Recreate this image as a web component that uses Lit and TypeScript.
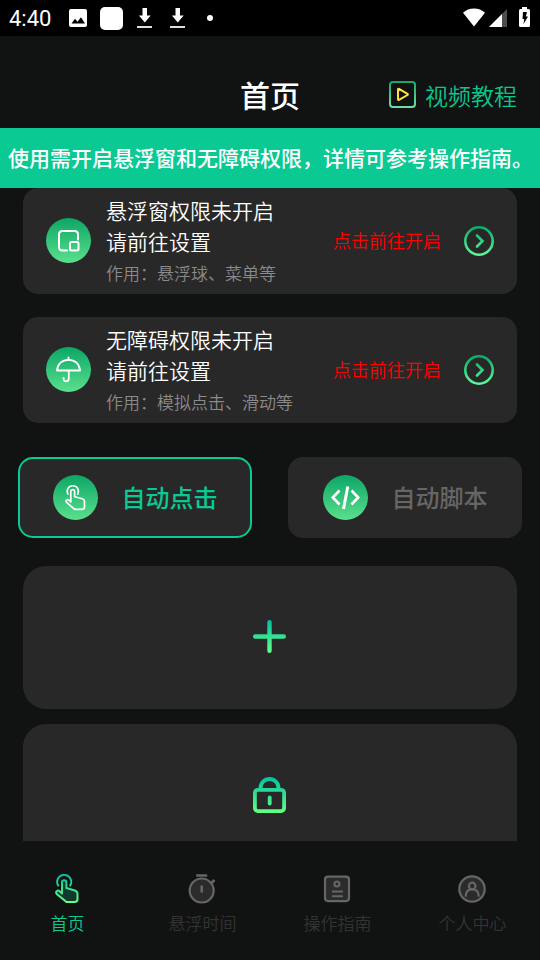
import { LitElement, html, css, svg, TemplateResult } from "lit";
import { customElement, property, state } from "lit/decorators.js";
import { classMap } from "lit/directives/class-map.js";

const gradient = (top: string, bottom: string, y1: number, y2: number) => svg`
  <defs>
    <linearGradient id="g" gradientUnits="userSpaceOnUse" x1="0" y1=${y1} x2="0" y2=${y2}>
      <stop offset="0" stop-color=${top}></stop>
      <stop offset="1" stop-color=${bottom}></stop>
    </linearGradient>
  </defs>`;

interface Glyph {
  width: number;
  height: number;
  body: TemplateResult<2>;
}

const glyphs: Record<string, Glyph> = {
  image: { width: 18, height: 18, body: svg`<rect width="18" height="18" rx="2" fill="#fff"/><path d="M2.500 14.500 6 9.800l2.500 3 3.500-4.500 4 6.200z" fill="#000"/>` },
  square: { width: 23, height: 23, body: svg`<rect width="23" height="23" rx="5" fill="#fff"/>` },
  download: { width: 20, height: 22, body: svg`<path d="M6.500 1h4.500v7.500h3.700L8.800 15.500 2.900 8.500h3.600z" fill="#fff"/><path d="M1 19h15v2H1z" fill="#ddd"/>` },
  dot: { width: 16, height: 6, body: svg`<circle cx="8" cy="3" r="3" fill="#fff"/>` },
  wifi: { width: 22, height: 20, body: svg`<path d="M11 18.500 0 4.800C3 2 6.700.500 11 .500S19 2 22 4.800z" fill="#fff"/>` },
  signal: { width: 18, height: 18, body: svg`<path d="M18 0v18H0z" fill="#4d4d4d"/><path d="M13 5v13H0z" fill="#fff"/>` },
  battery: { width: 11, height: 22, body: svg`<path d="M3 0h5v2h1.500Q11 2 11 3.500v15Q11 20 9.500 20h-8Q0 20 0 18.500v-15Q0 2 1.500 2H3z" fill="#fff"/><path d="M4 5h4L6.800 9.500H9L4.500 17l.700-5H3.500z" fill="#000"/>` },
  video: {
    width: 27, height: 27,
    body: svg`${gradient("#18a468", "#6fe0a8", 0, 27)}
      <rect x="1" y="1" width="25" height="25" rx="3" fill="none" stroke="url(#g)" stroke-width="2"/>
      <path d="M9 8.500q0-1 1-.600l8.500 4.900q.700.600 0 1.200L10 18.900q-1 .400-1-.600z" fill="none" stroke="#ffe13c" stroke-width="2" stroke-linejoin="round"/>`,
  },
  chevron: {
    width: 30, height: 30,
    body: svg`${gradient("#0aaa69", "#5ff79b", 1, 29)}
      <circle cx="15" cy="15" r="13.700" fill="none" stroke="url(#g)" stroke-width="2.600"/>
      <path d="M13 9.500 18.500 15 13 20.500" fill="none" stroke="url(#g)" stroke-width="2.600" stroke-linecap="round"/>`,
  },
  plus: {
    width: 34, height: 35,
    body: svg`${gradient("#08c4a0", "#62ff86", 2, 32)}
      <path d="M16.500 2.200v28.600M2.200 16.500h28.600" fill="none" stroke="url(#g)" stroke-width="4.400" stroke-linecap="round"/>`,
  },
  lock: {
    width: 34, height: 37,
    body: svg`${gradient("#08c4a0", "#62ff86", 2, 35)}
      <g fill="none" stroke="url(#g)" stroke-width="3.800">
        <rect x="1.900" y="12.800" width="29.200" height="21.300" rx="3"/>
        <path d="M7.500 12.500V11a9 9 0 0 1 18 0v1.500"/>
        <path d="M16.700 20.500v6" stroke-linecap="round"/>
      </g>`,
  },
  floating: {
    width: 45, height: 45,
    body: svg`<g fill="none" stroke="#fff" stroke-width="2">
      <path d="M21 32.500h-4.500q-3.500 0-3.500-3.500V16.500Q13 13 16.500 13H28.500Q32 13 32 16.500V21.500" stroke-linecap="round"/>
      <rect x="24" y="24" width="8.500" height="8.500" rx="1.500"/></g>`,
  },
  umbrella: {
    width: 45, height: 45,
    body: svg`<g fill="none" stroke="#fff" stroke-width="1.800" stroke-linecap="round" stroke-linejoin="round">
      <path d="M11 23.500C11.500 17 16 12.800 22.500 12.800S33.500 17 34 23.500z"/>
      <path d="M22.500 12.500v-2M22.800 24v7.500q0 2.800-2.600 2.800T17.600 31.500v-.700"/></g>`,
  },
  tapWhite: {
    width: 45, height: 45,
    body: svg`<g fill="none" stroke="#fff" stroke-width="1.700" stroke-linejoin="round" stroke-linecap="round">
      <path d="M14.800 19.200a5.700 5.700 0 1 1 10 0"/>
      <path d="M17.800 27V16.500q0-1.900 1.900-1.900t1.900 1.900v5.300l7.700 2q2.200.700 2.200 2.700v5.500q0 2.300-2.300 2.300h-7.500L13.600 27.300q-1-1.500.200-2.400 1-.700 2 .100z"/></g>`,
  },
  code: {
    width: 45, height: 45,
    body: svg`<g fill="none" stroke="#fff" stroke-width="2.600"><path d="M16.500 15.500 9.800 22.500l6.700 7M28.500 15.500l6.700 7-6.700 7"/><path d="M24.800 11.500 20.500 34" stroke-width="3"/></g>`,
  },
  home: {
    width: 28, height: 30,
    body: svg`${gradient("#08bf9c", "#66ff8a", 1, 29)}
      <g fill="none" stroke="url(#g)" stroke-width="2" stroke-linejoin="round" stroke-linecap="round">
        <path d="M4.200 11.500a7 7 0 1 1 12 0"/>
        <path d="M8 19.500V8.200q0-2 2.200-2t2.200 2V14l8.500 2.500Q23.500 17.300 23.500 20v5q0 3-3 3h-8L3 20.200q-1.600-1.700-.300-3 1.400-1.200 3 0z" fill="#123a2c"/>
      </g>`,
  },
  timer: {
    width: 30, height: 30,
    body: svg`<g fill="none" stroke="#666" stroke-width="2.200">
      <circle cx="13.700" cy="16.500" r="12" fill="#2b2b2b"/>
      <path d="M8.200 1.500h11M13.700 11.500v7M23 9.500l3.500-3.500" stroke-width="2.600"/></g>`,
  },
  guide: {
    width: 30, height: 30,
    body: svg`<g fill="none" stroke="#666" stroke-width="2.200">
      <rect x="2" y="2.600" width="24" height="24.500" rx="3" fill="#2b2b2b"/>
      <circle cx="13.900" cy="10" r="2.500"/><path d="M8.900 17.500h11M8.900 22.200h11" stroke-width="2"/></g>`,
  },
  profile: {
    width: 30, height: 30,
    body: svg`<g fill="none" stroke="#666" stroke-width="2.200">
      <circle cx="14" cy="15" r="12.700" fill="#2b2b2b"/>
      <circle cx="14.200" cy="12" r="3.300"/><path d="M7.700 21.800q.300-6.400 6.500-6.400t6.500 6.400" stroke-linecap="round"/></g>`,
  },
};

@customElement("app-icon")
export class AppIcon extends LitElement {
  static styles = css`
    :host { display: inline-flex; flex: none; }
    svg { display: block; }
    .disc { border-radius: 50%; background: linear-gradient(#0ca666, #5ae08d); }
  `;
  @property() name = "";
  @property({ type: Boolean }) disc = false;

  render() {
    const g = glyphs[this.name];
    return html`<svg class=${classMap({ disc: this.disc })} aria-hidden="true"
      width=${g.width} height=${g.height} viewBox="0 0 ${g.width} ${g.height}">${g.body}</svg>`;
  }
}

const permissions = [
  { icon: "floating", title: "悬浮窗权限未开启", use: "作用：悬浮球、菜单等" },
  { icon: "umbrella", title: "无障碍权限未开启", use: "作用：模拟点击、滑动等" },
];
const modes = [
  { icon: "tapWhite", label: "自动点击" },
  { icon: "code", label: "自动脚本" },
];
const tabs = [
  { icon: "home", label: "首页" },
  { icon: "timer", label: "悬浮时间" },
  { icon: "guide", label: "操作指南" },
  { icon: "profile", label: "个人中心" },
];

@customElement("app-root")
export class AppRoot extends LitElement {
  static styles = css`
    :host {
      display: flex;
      flex-direction: column;
      height: 100vh;
      background: #111312;
      color: #fff;
      font-family: "Noto Sans CJK SC", sans-serif;
      font-weight: 350;
    }
    * { box-sizing: border-box; }
    button { font: inherit; color: inherit; border: 0; margin: 0; padding: 0; background: none; cursor: pointer; }
    a { color: inherit; text-decoration: none; }
    h1, p { margin: 0; }

    .status {
      display: flex; align-items: center; flex: none;
      height: 36px; padding: 0 10px 0 9px;
      background: #000;
      font: 400 22px/36px Roboto, sans-serif;
    }
    .time { width: 60px; padding-top: 1px; }
    .notices { display: flex; align-items: center; gap: 13px; flex: 1; }
    .signals { display: flex; align-items: center; gap: 4px; }
    .signals .battery { margin-left: 8px; }

    .header {
      display: grid; grid-template-columns: 1fr auto 1fr; align-items: center; flex: none;
      padding: 24px 23px 0;
      height: 92px;
    }
    .header h1 { grid-column: 2; font-size: 30px; line-height: 44px; font-weight: 500; }
    .tutorial {
      justify-self: end; display: flex; align-items: center; gap: 9px;
      font-size: 23px; line-height: 34px; color: #0ac68f;
    }
    .tutorial span { padding-top: 1px; }

    .banner {
      flex: none; padding: 13px 8px 15px; background: #0ac992;
      font-size: 21px; line-height: 32px; font-weight: 500; white-space: nowrap;
    }

    main { flex: 1; min-height: 0; overflow: hidden; }
    .permissions { display: flex; flex-direction: column; gap: 23px; padding: 0 23px; }
    .permission {
      display: flex; align-items: center; width: 100%;
      padding: 0 23px; border-radius: 15px; background: #282828; text-align: left;
    }
    .permission app-icon { margin-bottom: 1px; }
    .info { flex: 1; margin-left: 15px; padding: 7px 0 6px; line-height: 31px; font-size: 21px; }
    .use { font-size: 17px; color: #8a8a8a; }
    .go { margin-right: 23px; padding-bottom: 2px; font-size: 18px; color: #f00; }

    .modes { display: grid; grid-template-columns: 1fr 1fr; gap: 36px; padding: 34px 18px 28px; }
    .mode {
      display: flex; align-items: center; justify-content: center; gap: 24px;
      padding: 16px 0; border: 2px solid #282828; border-radius: 15px; background: #282828;
      font-size: 24px; line-height: 43px; font-weight: 500; color: #666;
    }
    .mode span { padding-bottom: 2px; }
    .mode.active { border-color: #0ac992; color: #0ac992; }

    .slots { display: flex; flex-direction: column; gap: 15px; padding: 0 23px; }
    .slot {
      display: flex; align-items: center; justify-content: center;
      height: 143px; border-radius: 23px; background: #282828;
    }

    nav { flex: none; display: grid; grid-template-columns: repeat(4, 1fr); padding: 33px 0 24px; }
    .tab {
      display: flex; flex-direction: column; align-items: center; gap: 6px;
      font-size: 17px; line-height: 26px; color: #333;
    }
    .tab.active { color: #0ac992; }
  `;

  @state() private mode = 0;
  @state() private tab = 0;

  render() {
    return html`
      <div class="status">
        <span class="time">4:40</span>
        <span class="notices">
          <app-icon name="image"></app-icon>
          <app-icon name="square"></app-icon>
          <app-icon name="download"></app-icon>
          <app-icon name="download"></app-icon>
          <app-icon name="dot"></app-icon>
        </span>
        <span class="signals">
          <app-icon name="wifi"></app-icon>
          <app-icon name="signal"></app-icon>
          <app-icon class="battery" name="battery"></app-icon>
        </span>
      </div>
      <header class="header">
        <h1>首页</h1>
        <a class="tutorial" href="#tutorial"><app-icon name="video"></app-icon><span>视频教程</span></a>
      </header>
      <p class="banner">使用需开启悬浮窗和无障碍权限，详情可参考操作指南。</p>
      <main>
        <section class="permissions">
          ${permissions.map((p) => html`
            <button class="permission">
              <app-icon name=${p.icon} disc></app-icon>
              <div class="info">
                <div>${p.title}</div>
                <div>请前往设置</div>
                <div class="use">${p.use}</div>
              </div>
              <span class="go">点击前往开启</span>
              <app-icon name="chevron"></app-icon>
            </button>`)}
        </section>
        <section class="modes">
          ${modes.map((m, i) => html`
            <button class=${classMap({ mode: true, active: i === this.mode })}
              aria-pressed=${i === this.mode} @click=${() => (this.mode = i)}>
              <app-icon name=${m.icon} disc></app-icon><span>${m.label}</span>
            </button>`)}
        </section>
        <section class="slots">
          <button class="slot" aria-label="添加"><app-icon name="plus"></app-icon></button>
          <button class="slot" aria-label="未解锁"><app-icon name="lock"></app-icon></button>
        </section>
      </main>
      <nav>
        ${tabs.map((t, i) => html`
          <button class=${classMap({ tab: true, active: i === this.tab })} @click=${() => (this.tab = i)}>
            <app-icon name=${t.icon}></app-icon><span>${t.label}</span>
          </button>`)}
      </nav>
    `;
  }
}
